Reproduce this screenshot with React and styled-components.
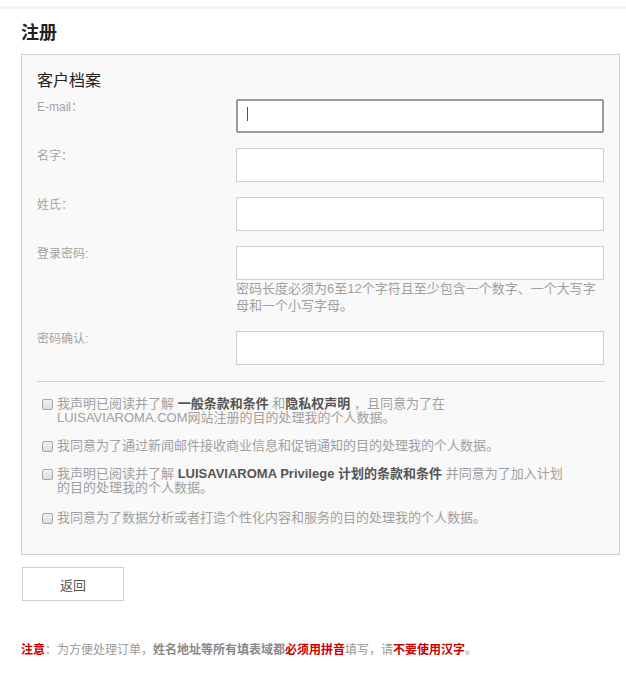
import React from "react";
import styled, { createGlobalStyle } from "styled-components";

const GlobalStyle = createGlobalStyle`
  body {
    margin: 0;
    background: #fff;
    font-family: "Liberation Sans", Arial, "Noto Sans CJK SC", sans-serif;
    color: #999;
  }
`;

const TopStrip = styled.div`
  height: 6px;
  border-bottom: 3px solid #f2f2f2;
`;

const Page = styled.div`
  padding: 12px 6px 0 21px;
`;

const Title = styled.h1`
  margin: 0 0 9px;
  font-size: 18px;
  line-height: 24px;
  font-weight: bold;
  color: #222;
`;

const Panel = styled.div`
  width: 599px;
  box-sizing: border-box;
  border: 1px solid #cdcdcd;
  background: #f9f9f9;
  padding: 16px 14px 29px 15px;
`;

const Heading = styled.h2`
  margin: 0 0 8px;
  font-size: 16px;
  line-height: 20px;
  font-weight: normal;
  color: #222;
`;

const Row = styled.div`
  display: flex;
  margin-bottom: ${(p) => (p.$gap ? p.$gap : 15)}px;
`;

const Label = styled.label`
  width: 199px;
  flex: none;
  font-size: 12px;
  line-height: 17px;
  color: #a3a3a3;
`;

const Field = styled.div`
  position: relative;
  width: 368px;
`;

const Input = styled.input`
  display: block;
  width: 100%;
  height: 34px;
  box-sizing: border-box;
  margin: 0;
  background: #fff;
  outline: none;
  border: ${(p) => (p.$focused ? "2px solid #9b9b9b" : "1px solid #cfcfcf")};
  border-radius: ${(p) => (p.$focused ? "2px" : "0")};
`;

const Caret = styled.span`
  position: absolute;
  left: 11px;
  top: 8px;
  width: 1px;
  height: 14px;
  background: #555;
`;

const Hint = styled.div`
  margin: 0 0 2px;
  font-size: 13px;
  line-height: 17px;
  color: #a0a0a0;
  white-space: nowrap;
`;

const Divider = styled.hr`
  margin: 1px 0 15px;
  border: 0;
  border-top: 1px solid #cfcfcf;
`;

const Consent = styled.label`
  display: flex;
  align-items: flex-start;
  margin-bottom: ${(p) => (p.$gap ? p.$gap : 14)}px;
  padding-left: 5px;
  font-size: 13px;
  line-height: 14px;
  color: #a0a0a0;
  &:last-child {
    margin-bottom: 0;
  }
`;

const Check = styled.input.attrs({ type: "checkbox" })`
  appearance: none;
  flex: none;
  width: 11px;
  height: 11px;
  margin: 2px 4px 0 0;
  border: 1px solid #a6a6a6;
  border-radius: 2px;
  background: linear-gradient(#f2f2f2, #dcdcdc);
`;

const Strong = styled.b`
  color: #555;
`;

const BackButton = styled.button`
  display: block;
  margin: 12px 0 0 1px;
  width: 102px;
  height: 34px;
  border: 1px solid #cfcfcf;
  background: #fff;
  font-family: inherit;
  font-size: 13px;
  color: #555;
  cursor: pointer;
`;

const Note = styled.p`
  margin: 40px 0 0;
  font-size: 12px;
  line-height: 18px;
  color: #999;
`;

const Red = styled.b`
  color: #cc0000;
`;

const Gray = styled.b`
  color: #8a8a8a;
`;

const fields = [
  { label: "名字：" },
  { label: "姓氏：" },
];

export default function App() {
  return (
    <>
      <GlobalStyle />
      <TopStrip />
      <Page>
        <Title>注册</Title>
        <Panel>
          <Heading>客户档案</Heading>
          <Row>
            <Label>E-mail：</Label>
            <Field>
              <Input $focused type="text" />
              <Caret />
            </Field>
          </Row>
          {fields.map((f) => (
            <Row key={f.label}>
              <Label>{f.label}</Label>
              <Field>
                <Input type="text" />
              </Field>
            </Row>
          ))}
          <Row>
            <Label>登录密码:</Label>
            <Field>
              <Input type="password" />
              <Hint>
                密码长度必须为6至12个字符且至少包含一个数字、一个大写字
                <br />
                母和一个小写字母。
              </Hint>
            </Field>
          </Row>
          <Row $gap={16}>
            <Label>密码确认:</Label>
            <Field>
              <Input type="password" />
            </Field>
          </Row>
          <Divider />
          <Consent>
            <Check />
            <span>
              我声明已阅读并了解 <Strong>一般条款和条件</Strong> 和
              <Strong>隐私权声明</Strong> ，且同意为了在
              <br />
              LUISAVIAROMA.COM网站注册的目的处理我的个人数据。
            </span>
          </Consent>
          <Consent>
            <Check />
            <span>我同意为了通过新闻邮件接收商业信息和促销通知的目的处理我的个人数据。</span>
          </Consent>
          <Consent $gap={16}>
            <Check />
            <span>
              我声明已阅读并了解 <Strong>LUISAVIAROMA Privilege 计划的条款和条件</Strong>{" "}
              并同意为了加入计划
              <br />
              的目的处理我的个人数据。
            </span>
          </Consent>
          <Consent>
            <Check />
            <span>我同意为了数据分析或者打造个性化内容和服务的目的处理我的个人数据。</span>
          </Consent>
        </Panel>
        <BackButton>返回</BackButton>
        <Note>
          <Red>注意</Red>：为方便处理订单，<Gray>姓名地址等所有填表域都</Gray>
          <Red>必须用拼音</Red>填写，请<Red>不要使用汉字</Red>。
        </Note>
      </Page>
    </>
  );
}
